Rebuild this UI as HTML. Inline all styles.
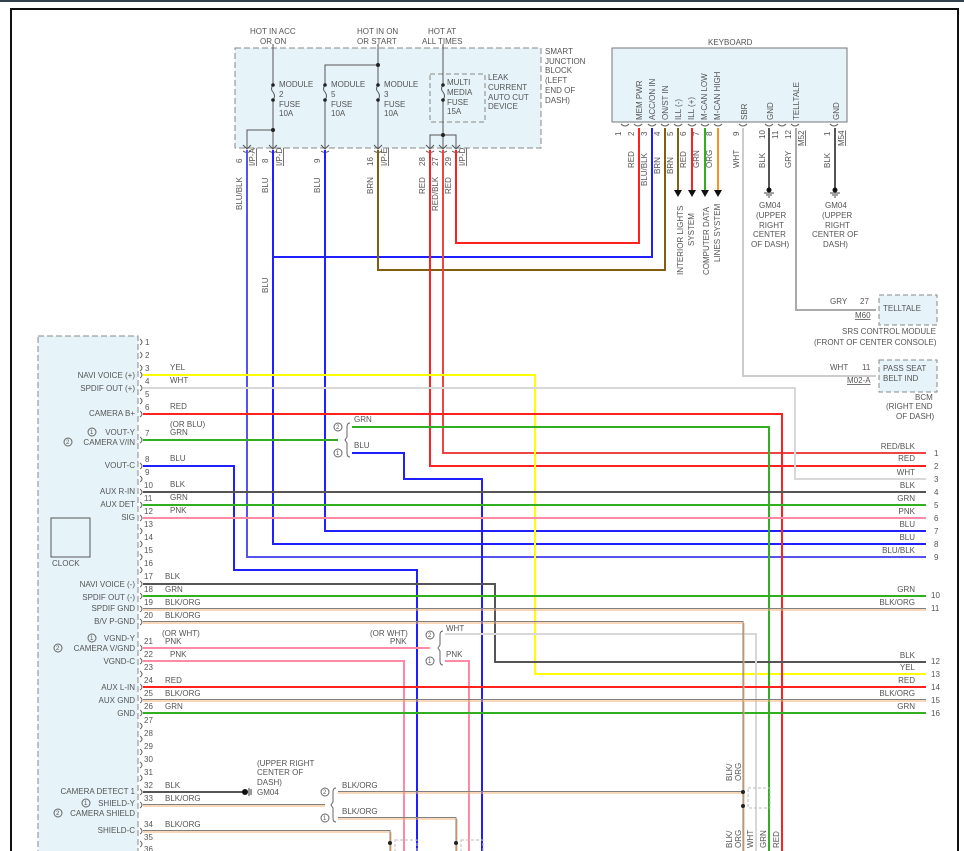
<!DOCTYPE html>
<html><head><meta charset="utf-8"><style>
html,body{margin:0;padding:0;background:#fff;}
svg{display:block;font-family:"Liberation Sans",sans-serif;}
text{font-size:8px;fill:#555;}
.w{fill:none;stroke-width:2;}
</style></head><body>
<svg width="964" height="851" viewBox="0 0 964 851" xmlns="http://www.w3.org/2000/svg">
<rect x="0" y="0" width="964" height="2" fill="#30404c"/>
<path d="M11 851 V9 H958 V851" fill="none" stroke="#111" stroke-width="2"/>

<rect x="235" y="48" width="306" height="100" fill="#e6f3f9" stroke="#888" stroke-dasharray="6,3"/>
<rect x="430" y="74" width="55" height="48" fill="none" stroke="#888" stroke-dasharray="5,3"/>
<g fill="none" stroke="#555" stroke-width="1">
<path d="M273 44 V85 M273 100 V148 M273 130 H247 V148"/>
<path d="M378 44 V85 M378 100 V148 M378 65 H325 V85 M325 100 V148"/>
<path d="M443 44 V85 M443 100 V148 M430 148 V135 H456 V148"/>
<path d="M273 85 q-3 4 0 7 q3 4 0 8 M325 85 q-3 4 0 7 q3 4 0 8 M378 85 q-3 4 0 7 q3 4 0 8 M443 85 q-3 4 0 7 q3 4 0 8"/>
</g>
<g fill="#222"><circle cx="273" cy="130" r="2"/><circle cx="378" cy="65" r="2"/><circle cx="443" cy="135" r="2"/>
<circle cx="273" cy="85" r="1.8"/><circle cx="273" cy="100" r="1.8"/><circle cx="325" cy="85" r="1.8"/><circle cx="325" cy="100" r="1.8"/><circle cx="378" cy="85" r="1.8"/><circle cx="378" cy="100" r="1.8"/><circle cx="443" cy="85" r="1.8"/><circle cx="443" cy="100" r="1.8"/></g>
<g fill="none" stroke="#555" stroke-width="1">
<path d="M243 145 l4 4 l4 -4 M269 145 l4 4 l4 -4 M321 145 l4 4 l4 -4 M374 145 l4 4 l4 -4 M426 145 l4 4 l4 -4 M439 145 l4 4 l4 -4 M452 145 l4 4 l4 -4"/>
<path d="M243 151 q4 3 8 0 M269 151 q4 3 8 0 M321 151 q4 3 8 0 M374 151 q4 3 8 0 M426 151 q4 3 8 0 M439 151 q4 3 8 0 M452 151 q4 3 8 0"/>
</g>
<text x="250" y="34">HOT IN ACC</text><text x="260" y="44">OR ON</text>
<text x="357" y="34">HOT IN ON</text><text x="357" y="44">OR START</text>
<text x="428" y="34">HOT AT</text><text x="422" y="44">ALL TIMES</text>
<text x="279" y="87">MODULE</text><text x="279" y="97">2</text><text x="279" y="107">FUSE</text><text x="279" y="116">10A</text>
<text x="331" y="87">MODULE</text><text x="331" y="97">5</text><text x="331" y="107">FUSE</text><text x="331" y="116">10A</text>
<text x="384" y="87">MODULE</text><text x="384" y="97">3</text><text x="384" y="107">FUSE</text><text x="384" y="116">10A</text>
<text x="447" y="85">MULTI</text><text x="447" y="95">MEDIA</text><text x="447" y="105">FUSE</text><text x="447" y="114">15A</text>
<text x="488" y="80">LEAK</text><text x="488" y="90">CURRENT</text><text x="488" y="100">AUTO CUT</text><text x="488" y="109">DEVICE</text>
<text x="545" y="54">SMART</text><text x="545" y="64">JUNCTION</text><text x="545" y="73">BLOCK</text><text x="545" y="83">(LEFT</text><text x="545" y="93">END OF</text><text x="545" y="103">DASH)</text>
<g transform="rotate(-90)">
<text x="-163" y="242">6</text><text x="-166" y="255" text-decoration="underline">I/P-A</text>
<text x="-163" y="268">8</text><text x="-166" y="282" text-decoration="underline">I/P-D</text>
<text x="-163" y="320">9</text>
<text x="-166" y="373">16</text><text x="-166" y="387" text-decoration="underline">I/P-E</text>
<text x="-166" y="425">28</text><text x="-166" y="438">27</text><text x="-166" y="451">29</text><text x="-166" y="465" text-decoration="underline">I/P-D</text>
<text x="-210" y="242">BLU/BLK</text><text x="-193" y="268">BLU</text><text x="-193" y="320">BLU</text><text x="-194" y="373">BRN</text>
<text x="-194" y="425">RED</text><text x="-211" y="438">RED/BLK</text><text x="-194" y="451">RED</text>
<text x="-293" y="268">BLU</text>
</g>

<rect x="612" y="48" width="235" height="74" fill="#e6f3f9" stroke="#777" stroke-width="1"/>
<text x="708" y="45">KEYBOARD</text>
<g transform="rotate(-90)">
<text x="-120" y="642">MEM PWR</text><text x="-120" y="655">ACC/ON IN</text><text x="-120" y="668">ON/ST IN</text>
<text x="-120" y="681">ILL (-)</text><text x="-120" y="694">ILL (+)</text><text x="-120" y="707">M-CAN LOW</text><text x="-120" y="720">M-CAN HIGH</text>
<text x="-120" y="747">SBR</text><text x="-120" y="773">GND</text><text x="-120" y="799">TELLTALE</text><text x="-120" y="839">GND</text>
<text x="-136" y="621">1</text><text x="-136" y="634">2</text><text x="-136" y="647">3</text><text x="-136" y="660">4</text><text x="-136" y="673">5</text><text x="-136" y="686">6</text><text x="-136" y="699">7</text><text x="-136" y="712">8</text><text x="-136" y="739">9</text><text x="-139" y="765">10</text><text x="-139" y="778">11</text><text x="-139" y="791">12</text><text x="-136" y="830">1</text>
<text x="-146" y="804" text-decoration="underline">M52</text><text x="-146" y="844" text-decoration="underline">M54</text>
<text x="-168" y="634">RED</text><text x="-186" y="647">BLU/BLK</text><text x="-174" y="660">BRN</text><text x="-174" y="673">BRN</text><text x="-168" y="686">RED</text><text x="-168" y="699">GRN</text><text x="-168" y="712">ORG</text><text x="-168" y="739">WHT</text><text x="-168" y="765">BLK</text><text x="-168" y="791">GRY</text><text x="-168" y="830">BLK</text>
<text x="-275" y="683">INTERIOR LIGHTS</text><text x="-246" y="694">SYSTEM</text>
<text x="-275" y="709">COMPUTER DATA</text><text x="-262" y="720">LINES SYSTEM</text>
</g>
<path d="M621 124 q4 4 8 0 M634 124 q4 4 8 0 M648 124 q4 4 8 0 M661 124 q4 4 8 0 M674 124 q4 4 8 0 M688 124 q4 4 8 0 M701 124 q4 4 8 0 M714 124 q4 4 8 0 M739 124 q4 4 8 0 M765 124 q4 4 8 0 M778 124 q4 4 8 0 M791 124 q4 4 8 0 M830 124 q4 4 8 0" fill="none" stroke="#666"/>
<path d="M678 128 V190" class="w" stroke="#806010"/><path d="M692 128 V190" class="w" stroke="#ff2020"/><path d="M705 128 V190" class="w" stroke="#30b020"/><path d="M718 128 V190" class="w" stroke="#ff9020"/>
<path d="M674 190 h8 l-4 7z M688 190 h8 l-4 7z M701 190 h8 l-4 7z M714 190 h8 l-4 7z" fill="#111"/>
<path d="M769 128 V190 M835 128 V190" class="w" stroke="#555"/>
<g fill="#111"><circle cx="769" cy="190" r="2.5"/><circle cx="835" cy="190" r="2.5"/></g>
<path d="M764 193 h10 M766 195 h6 M768 197 h2 M830 193 h10 M832 195 h6 M834 197 h2" stroke="#444"/>
<text x="759" y="208">GM04</text><text x="756" y="218">(UPPER</text><text x="759" y="228">RIGHT</text><text x="753" y="237">CENTER</text><text x="751" y="247">OF DASH)</text>
<text x="825" y="208">GM04</text><text x="822" y="218">(UPPER</text><text x="825" y="228">RIGHT</text><text x="812" y="237">CENTER OF</text><text x="823" y="247">DASH)</text>

<path d="M796 128 V310 H876" class="w" stroke="#aaa" stroke-width="1.5"/>
<path d="M743 128 V376 H876" class="w" stroke="#ccc" stroke-width="1.5"/>
<rect x="879" y="295" width="58" height="30" fill="#e6f3f9" stroke="#888" stroke-dasharray="5,3"/>
<rect x="879" y="360" width="58" height="32" fill="#e6f3f9" stroke="#888" stroke-dasharray="5,3"/>
<text x="883" y="311">TELLTALE</text><text x="883" y="371">PASS SEAT</text><text x="883" y="381">BELT IND</text>
<text x="830" y="304">GRY</text><text x="860" y="304">27</text><text x="855" y="318" text-decoration="underline">M60</text>
<text x="830" y="370">WHT</text><text x="862" y="370">11</text><text x="847" y="383" text-decoration="underline">M02-A</text>
<text x="842" y="334">SRS CONTROL MODULE</text><text x="814" y="345">(FRONT OF CENTER CONSOLE)</text>
<text x="915" y="400">BCM</text><text x="886" y="409">(RIGHT END</text><text x="896" y="419">OF DASH)</text>

<rect x="38" y="336" width="100" height="520" fill="#e6f3f9" stroke="#888" stroke-dasharray="6,3"/>
<rect x="51" y="518" width="39" height="39" fill="#e6f3f9" stroke="#555"/>
<text x="52" y="566">CLOCK</text>
<g fill="none" stroke="#666">
<path d="M140 339 q4 3 0 6 M140 352 q4 3 0 6 M140 365 q4 3 0 6 M140 372 q4 3 0 6 M140 385 q4 3 0 6 M140 398 q4 3 0 6 M140 411 q4 3 0 6 M140 437 q4 3 0 6 M140 463 q4 3 0 6 M140 476 q4 3 0 6 M140 489 q4 3 0 6 M140 502 q4 3 0 6 M140 515 q4 3 0 6 M140 528 q4 3 0 6 M140 541 q4 3 0 6 M140 554 q4 3 0 6 M140 567 q4 3 0 6 M140 581 q4 3 0 6 M140 593 q4 3 0 6 M140 606 q4 3 0 6 M140 619 q4 3 0 6 M140 645 q4 3 0 6 M140 658 q4 3 0 6 M140 671 q4 3 0 6 M140 684 q4 3 0 6 M140 697 q4 3 0 6 M140 710 q4 3 0 6 M140 723 q4 3 0 6 M140 736 q4 3 0 6 M140 749 q4 3 0 6 M140 762 q4 3 0 6 M140 775 q4 3 0 6 M140 789 q4 3 0 6 M140 802 q4 3 0 6 M140 828 q4 3 0 6 M140 841 q4 3 0 6"/>
</g>
<g>
<text x="145" y="345">1</text><text x="145" y="358">2</text><text x="145" y="371">3</text><text x="145" y="384">4</text><text x="145" y="397">5</text><text x="145" y="410">6</text><text x="145" y="436">7</text><text x="145" y="462">8</text><text x="145" y="475">9</text><text x="144" y="488">10</text><text x="144" y="501">11</text><text x="144" y="514">12</text><text x="144" y="527">13</text><text x="144" y="540">14</text><text x="144" y="553">15</text><text x="144" y="566">16</text><text x="144" y="579">17</text><text x="144" y="592">18</text><text x="144" y="605">19</text><text x="144" y="618">20</text><text x="144" y="644">21</text><text x="144" y="657">22</text><text x="144" y="670">23</text><text x="144" y="683">24</text><text x="144" y="696">25</text><text x="144" y="709">26</text><text x="144" y="723">27</text><text x="144" y="736">28</text><text x="144" y="749">29</text><text x="144" y="762">30</text><text x="144" y="775">31</text><text x="144" y="788">32</text><text x="144" y="801">33</text><text x="144" y="827">34</text><text x="144" y="840">35</text><text x="144" y="852">36</text>
</g>
<g text-anchor="end">
<text x="135" y="378">NAVI VOICE (+)</text><text x="135" y="391">SPDIF OUT (+)</text><text x="135" y="416">CAMERA B+</text>
<text x="135" y="435">VOUT-Y</text><text x="135" y="445">CAMERA V/IN</text><text x="135" y="468">VOUT-C</text>
<text x="135" y="494">AUX R-IN</text><text x="135" y="507">AUX DET</text><text x="135" y="520">SIG</text>
<text x="135" y="587">NAVI VOICE (-)</text><text x="135" y="600">SPDIF OUT (-)</text><text x="135" y="611">SPDIF GND</text><text x="135" y="624">B/V P-GND</text>
<text x="135" y="641">VGND-Y</text><text x="135" y="651">CAMERA V/GND</text><text x="135" y="664">VGND-C</text>
<text x="135" y="690">AUX L-IN</text><text x="135" y="703">AUX GND</text><text x="135" y="716">GND</text>
<text x="135" y="794">CAMERA DETECT 1</text><text x="135" y="806">SHIELD-Y</text><text x="135" y="816">CAMERA SHIELD</text><text x="135" y="833">SHIELD-C</text>
</g>
<g fill="none" stroke="#666"><circle cx="92" cy="432" r="4"/><circle cx="68" cy="442" r="4"/><circle cx="92" cy="638" r="4"/><circle cx="58" cy="648" r="4"/><circle cx="86" cy="803" r="4"/><circle cx="58" cy="813" r="4"/>
<circle cx="338" cy="427" r="4"/><circle cx="338" cy="453" r="4"/><circle cx="430" cy="635" r="4"/><circle cx="430" cy="661" r="4"/><circle cx="325" cy="792" r="4"/><circle cx="325" cy="818" r="4"/></g>
<g><text x="90" y="434" style="font-size:6px">1</text><text x="66" y="444" style="font-size:6px">2</text><text x="90" y="640" style="font-size:6px">1</text><text x="56" y="650" style="font-size:6px">2</text><text x="84" y="805" style="font-size:6px">1</text><text x="56" y="815" style="font-size:6px">2</text>
<text x="336" y="429" style="font-size:6px">2</text><text x="336" y="455" style="font-size:6px">1</text><text x="428" y="637" style="font-size:6px">2</text><text x="428" y="663" style="font-size:6px">1</text><text x="323" y="794" style="font-size:6px">2</text><text x="323" y="820" style="font-size:6px">1</text></g>
<path d="M350 423 q-3 0 -3 4 v10 l-2 3 l2 3 v10 q0 4 3 4 M443 631 q-3 0 -3 4 v10 l-2 3 l2 3 v10 q0 4 3 4 M336 788 q-3 0 -3 4 v10 l-2 3 l2 3 v10 q0 4 3 4" fill="none" stroke="#666"/>

<g>
<path d="M247 150 V557 H926" stroke="#5555ee" class="w"/>
<path d="M273 150 V544 H926" stroke="#2020ff" class="w"/>
<path d="M273 257 H652 V128" stroke="#2020ff" class="w"/>
<path d="M325 150 V531 H926" stroke="#2020ff" class="w"/>
<path d="M378 150 V270 H665 V128" stroke="#806010" class="w"/>
<path d="M430 150 V466 H926" stroke="#ff2020" class="w"/>
<path d="M443 150 V453 H926" stroke="#ee4444" class="w"/>
<path d="M456 150 V243 H639 V128" stroke="#ff2020" class="w"/>
<path d="M143 375 H535 V674 H926" stroke="#ffff00" class="w"/>
<path d="M143 388 H795 V479 H926" stroke="#d8d8d8" class="w"/>
<path d="M143 414 H782 V851" stroke="#ff2020" class="w"/>
<path d="M143 440 H338" stroke="#30b020" class="w"/>
<path d="M352 427 H769 V851" stroke="#30b020" class="w"/>
<path d="M352 453 H404 V479 H482 V851" stroke="#2020ff" class="w"/>
<path d="M143 466 H234 V570 H417 V851" stroke="#2020ff" class="w"/>
<path d="M143 492 H926" stroke="#555" class="w"/>
<path d="M143 505 H926" stroke="#30b020" class="w"/>
<path d="M143 518 H926" stroke="#ff8aa8" class="w"/>
<path d="M143 584 H495 V662 H926" stroke="#555" class="w"/>
<path d="M143 596 H926" stroke="#30b020" class="w"/>
<path d="M143 648 H430" stroke="#ff8aa8" class="w"/>
<path d="M445 634 H756 V851" stroke="#d8d8d8" class="w"/>
<path d="M445 661 H469 V851" stroke="#ff8aa8" class="w"/>
<path d="M143 661 H404 V851" stroke="#ff8aa8" class="w"/>
<path d="M143 687 H926" stroke="#ff2020" class="w"/>
<path d="M143 713 H926" stroke="#30b020" class="w"/>
<path d="M143 792 H243" stroke="#555" class="w"/>
</g>
<g fill="none" stroke-width="1">
<path d="M143 608.5 H926 M143 621.5 H743 V851 M143 699.5 H926 M143 804.5 H325 M338 791.5 H743 M338 817.5 H456 V851 M143 830.5 H390 V851" stroke="#808080"/>
<path d="M143 610 H926 M143 623 H742 M143 701 H926 M143 806 H325 M338 793 H742 M338 819 H455 M143 832 H389" stroke="#f0b070"/>
<path d="M744 623 V851 M457 819 V851 M391 832 V851" stroke="#f0b070"/>
</g>
<circle cx="245" cy="792" r="3" fill="#111"/><path d="M249 788 v8 M251 789 v6" stroke="#333"/>
<text x="257" y="795">GM04</text><text x="257" y="766">(UPPER RIGHT</text><text x="257" y="775">CENTER OF</text><text x="257" y="785">DASH)</text>
<g fill="#222"><circle cx="743" cy="792" r="2"/><circle cx="743" cy="806" r="2"/><circle cx="390" cy="843" r="2"/><circle cx="456" cy="843" r="2"/></g>
<rect x="748" y="788" width="22" height="20" fill="none" stroke="#bbb" stroke-dasharray="3,2"/>
<rect x="395" y="840" width="22" height="14" fill="none" stroke="#bbb" stroke-dasharray="3,2"/>
<rect x="461" y="840" width="22" height="14" fill="none" stroke="#bbb" stroke-dasharray="3,2"/>
<g transform="rotate(-90)">
<text x="-781" y="732">BLK/</text><text x="-781" y="741">ORG</text>
<text x="-848" y="732">BLK/</text><text x="-848" y="741">ORG</text><text x="-848" y="753">WHT</text><text x="-848" y="766">GRN</text><text x="-848" y="779">RED</text>
</g>

<text x="170" y="370">YEL</text><text x="170" y="383">WHT</text><text x="170" y="409">RED</text><text x="170" y="427">(OR BLU)</text><text x="170" y="435">GRN</text><text x="170" y="461">BLU</text>
<text x="170" y="487">BLK</text><text x="170" y="500">GRN</text><text x="170" y="513">PNK</text>
<text x="165" y="579">BLK</text><text x="165" y="592">GRN</text><text x="165" y="605">BLK/ORG</text><text x="165" y="618">BLK/ORG</text>
<text x="162" y="636">(OR WHT)</text><text x="165" y="644">PNK</text><text x="170" y="657">PNK</text>
<text x="165" y="683">RED</text><text x="165" y="696">BLK/ORG</text><text x="165" y="709">GRN</text>
<text x="165" y="788">BLK</text><text x="165" y="801">BLK/ORG</text><text x="165" y="827">BLK/ORG</text>
<text x="354" y="422">GRN</text><text x="354" y="448">BLU</text>
<text x="370" y="636">(OR WHT)</text><text x="390" y="644">PNK</text><text x="446" y="631">WHT</text><text x="446" y="657">PNK</text>
<text x="342" y="788">BLK/ORG</text><text x="342" y="814">BLK/ORG</text>
<g text-anchor="end">
<text x="915" y="449">RED/BLK</text><text x="915" y="461">RED</text><text x="915" y="475">WHT</text><text x="915" y="488">BLK</text><text x="915" y="501">GRN</text><text x="915" y="514">PNK</text><text x="915" y="527">BLU</text><text x="915" y="540">BLU</text><text x="915" y="553">BLU/BLK</text>
<text x="915" y="592">GRN</text><text x="915" y="605">BLK/ORG</text><text x="915" y="658">BLK</text><text x="915" y="670">YEL</text><text x="915" y="683">RED</text><text x="915" y="696">BLK/ORG</text><text x="915" y="709">GRN</text>
</g>
<g>
<text x="934" y="456">1</text><text x="934" y="469">2</text><text x="934" y="482">3</text><text x="934" y="495">4</text><text x="934" y="508">5</text><text x="934" y="521">6</text><text x="934" y="534">7</text><text x="934" y="547">8</text><text x="934" y="560">9</text>
<text x="931" y="598">10</text><text x="931" y="611">11</text><text x="931" y="664">12</text><text x="931" y="677">13</text><text x="931" y="690">14</text><text x="931" y="703">15</text><text x="931" y="716">16</text>
</g>
</svg>
</body></html>
